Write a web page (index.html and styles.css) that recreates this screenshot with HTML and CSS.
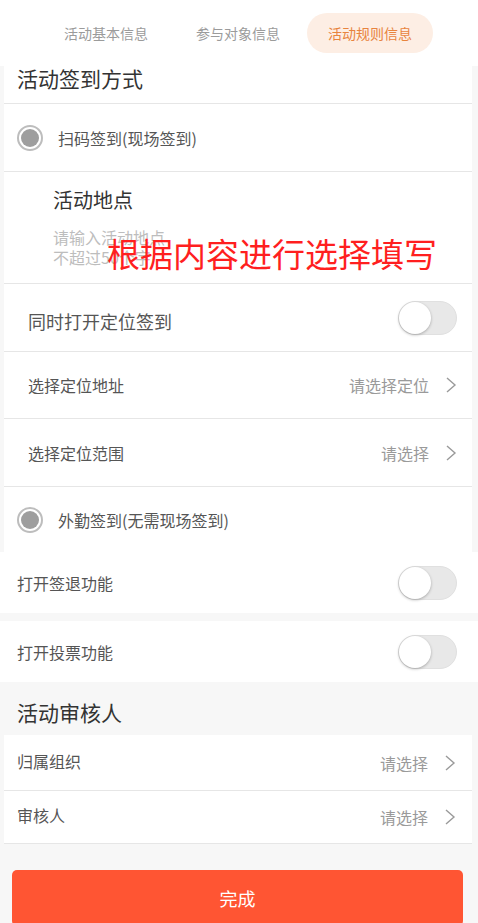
FILE: index.html
```html
<!DOCTYPE html>
<html lang="zh-CN">
<head>
<meta charset="utf-8">
<title>活动规则信息</title>
<link rel="stylesheet" href="styles.css">
</head>
<body>
<header class="tabs">
  <div class="tab">活动基本信息</div>
  <div class="tab">参与对象信息</div>
  <div class="tab active">活动规则信息</div>
</header>

<section class="card">
  <div class="card-title">活动签到方式</div>
  <div class="radio-row bordered">
    <span class="radio"></span>
    <span class="radio-label">扫码签到(现场签到)</span>
  </div>
  <div class="location bordered">
    <div class="loc-title">活动地点</div>
    <div class="loc-placeholder">请输入活动地点<br>不超过50个字</div>
    <div class="annotation">根据内容进行选择填写</div>
  </div>
  <div class="row bordered indent">
    <span class="label big">同时打开定位签到</span>
    <span class="switch"><span class="knob"></span></span>
  </div>
  <div class="row bordered short">
    <span class="label">选择定位地址</span>
    <span class="value">请选择定位<svg class="chev" width="12" height="18" viewBox="0 0 12 18"><polyline points="2,2 10,9 2,16" fill="none" stroke="#9a9a9a" stroke-width="1.4"/></svg></span>
  </div>
  <div class="row bordered">
    <span class="label">选择定位范围</span>
    <span class="value">请选择<svg class="chev" width="12" height="18" viewBox="0 0 12 18"><polyline points="2,2 10,9 2,16" fill="none" stroke="#9a9a9a" stroke-width="1.4"/></svg></span>
  </div>
  <div class="radio-row last">
    <span class="radio"></span>
    <span class="radio-label">外勤签到(无需现场签到)</span>
  </div>
</section>

<div class="full-row">
  <span class="label">打开签退功能</span>
  <span class="switch"><span class="knob"></span></span>
</div>
<div class="full-row spaced">
  <span class="label">打开投票功能</span>
  <span class="switch"><span class="knob"></span></span>
</div>

<div class="section-title">活动审核人</div>

<section class="card card2">
  <div class="row2 bordered first">
    <span class="label up">归属组织</span>
    <span class="value">请选择<svg class="chev" width="12" height="18" viewBox="0 0 12 18"><polyline points="2,2 10,9 2,16" fill="none" stroke="#9a9a9a" stroke-width="1.4"/></svg></span>
  </div>
  <div class="row2 bordered second">
    <span class="label up">审核人</span>
    <span class="value">请选择<svg class="chev" width="12" height="18" viewBox="0 0 12 18"><polyline points="2,2 10,9 2,16" fill="none" stroke="#9a9a9a" stroke-width="1.4"/></svg></span>
  </div>
</section>

<button class="done">完成</button>
</body>
</html>
```

FILE: styles.css
```css
* { box-sizing: border-box; }
html, body { margin: 0; padding: 0; }
body {
  background: #f7f7f7;
  font-family: "Noto Sans CJK SC", "Noto Sans", sans-serif;
  color: #555;
  width: 478px;
  overflow: hidden;
}

.tabs {
  background: #fff;
  height: 66px;
  display: flex;
  gap: 6px;
  padding: 13px 0 13px 43px;
}
.tab {
  width: 126px;
  height: 40px;
  line-height: 40px;
  text-align: center;
  font-size: 14px;
  color: #9b9b9b;
  border-radius: 20px;
}
.tab.active {
  background: #fdeee4;
  color: #e8843e;
}

.card {
  background: #fff;
  margin: 0 6px 0 4px;
}
.bordered { border-bottom: 1px solid #e6e6e6; }

.card-title {
  height: 38px;
  padding-left: 13px;
  font-size: 21px;
  line-height: 24px;
  color: #333;
  border-bottom: 1px solid #e6e6e6;
}

.radio-row {
  height: 68px;
  display: flex;
  align-items: center;
  padding-left: 13px;
  gap: 15px;
}
.radio-row.last { height: 65px; }
.radio {
  width: 26px;
  height: 26px;
  border-radius: 50%;
  border: 2px solid #bdbdbd;
  display: flex;
  align-items: center;
  justify-content: center;
}
.radio::after {
  content: "";
  width: 18px;
  height: 18px;
  border-radius: 50%;
  background: #9e9e9e;
}
.radio-label { font-size: 16px; color: #555; }

.location {
  position: relative;
  height: 112px;
  padding: 15px 0 0 49px;
}
.loc-title {
  font-size: 20px;
  line-height: 26px;
  color: #333;
}
.loc-placeholder {
  margin-top: 14px;
  font-size: 16px;
  line-height: 20px;
  color: #bdbdbd;
}
.annotation {
  position: absolute;
  left: 103px;
  top: 61px;
  font-size: 33px;
  line-height: 40px;
  color: #ff1f1f;
  white-space: nowrap;
}

.row {
  height: 68px;
  display: flex;
  align-items: center;
  justify-content: space-between;
  padding: 0 15px 0 24px;
}
.row.short { height: 67px; }
.label { font-size: 16px; color: #555; }
.label.big { font-size: 18px; padding-top: 6px; }
.value {
  display: flex;
  align-items: center;
  font-size: 16px;
  color: #9a9a9a;
}
.chev { margin-left: 16px; }

.switch {
  width: 59px;
  height: 34px;
  border-radius: 17px;
  background: #e8e8e8;
  border: 1px solid #e0e0e0;
  display: flex;
  align-items: center;
}
.knob {
  width: 32px;
  height: 32px;
  border-radius: 50%;
  background: #fff;
  box-shadow: 0 1px 3px rgba(0, 0, 0, 0.28);
}

.full-row {
  background: #fff;
  height: 61px;
  display: flex;
  align-items: center;
  justify-content: space-between;
  padding: 0 21px 0 17px;
}
.full-row.spaced { margin-top: 8px; }

.section-title {
  height: 53px;
  padding: 18px 0 0 17px;
  font-size: 21px;
  line-height: 24px;
  color: #333;
}

.row2 {
  display: flex;
  align-items: center;
  justify-content: space-between;
  padding: 0 16px 0 13px;
}
.row2.first { height: 56px; }
.row2.second { height: 53px; }
.up { position: relative; top: -2px; }

.done {
  display: block;
  margin: 26px 15px 0 12px;
  width: 451px;
  height: 56px;
  border: none;
  border-radius: 5px;
  background: #ff5533;
  color: #fff;
  font-family: "Noto Sans CJK SC", "Noto Sans", sans-serif;
  font-size: 18px;
  padding: 0;
}
```
